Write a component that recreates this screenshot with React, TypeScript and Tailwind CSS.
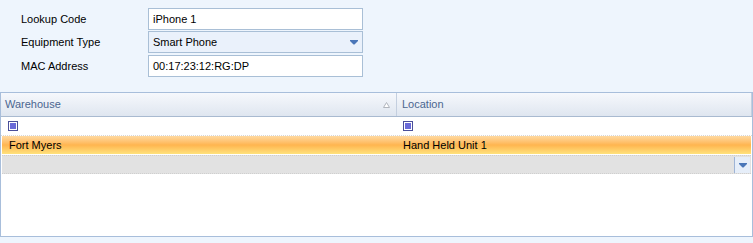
import React from "react";

function FilterIcon() {
  return (
    <span className="inline-block w-[10px] h-[10px] border border-[#4a4f9a] bg-white p-[1px]">
      <span className="block w-full h-full bg-[#6a6ad8]" />
    </span>
  );
}

function Arrow() {
  return (
    <svg width="8" height="5" viewBox="0 0 8 5">
      <path d="M0 0 H8 V1 L4.5 4.5 H3.5 L0 1 Z" fill="#4a76b8" />
    </svg>
  );
}

export default function App() {
  return (
    <div
      className="w-[753px] h-[243px] bg-[#eef5fd] text-[11px] text-black overflow-hidden"
      style={{ fontFamily: '"Liberation Sans", Arial, sans-serif' }}
    >
      <div className="pt-[8px] flex flex-col">
        <div className="flex items-center h-[22px]">
          <div className="w-[148px] pl-[21px]">Lookup Code</div>
          <div className="w-[215px] h-[22px] border border-[#a9bfd6] bg-white pl-[4px] flex items-center">iPhone 1</div>
        </div>
        <div className="flex items-center h-[22px] mt-[1px]">
          <div className="w-[148px] pl-[21px]">Equipment Type</div>
          <div className="w-[215px] h-[22px] border border-[#a9bfd6] bg-[#eaf1fb] pl-[4px] pr-[4px] flex items-center justify-between">
            <span>Smart Phone</span>
            <Arrow />
          </div>
        </div>
        <div className="flex items-center h-[22px] mt-[2px]">
          <div className="w-[148px] pl-[21px]">MAC Address</div>
          <div className="w-[215px] h-[22px] border border-[#a9bfd6] bg-white pl-[4px] flex items-center">00:17:23:12:RG:DP</div>
        </div>
      </div>

      <div className="mt-[15px] h-[145px] border border-[#a8bedb] bg-white flex flex-col">
        <div className="flex h-[24px] border-b border-[#a9bad0] bg-gradient-to-b from-[#f6f8fc] to-[#dfe6f0] text-[#4b6690]">
          <div className="w-[396px] flex items-center justify-between pl-[4px] pr-[6px] border-r border-[#c4cfdf]">
            <span>Warehouse</span>
            <svg width="7" height="6" viewBox="0 0 7 6">
              <path d="M3.5 0.5 L6.5 5.5 H0.5 Z" fill="#ffffff" stroke="#b0b5bd" strokeWidth="1" />
            </svg>
          </div>
          <div className="flex-1 flex items-center pl-[5px] border-r border-[#c4cfdf]">Location</div>
        </div>
        <div className="flex h-[19px] items-center border-b border-dotted border-[#d8d8d8]">
          <div className="w-[396px] pl-[7px] flex items-center"><FilterIcon /></div>
          <div className="flex-1 pl-[6px] flex items-center"><FilterIcon /></div>
        </div>
        <div className="flex h-[18px] mx-[1px] items-center bg-gradient-to-b from-[#ffd9a0] via-[#ffb54f] to-[#ffe27c]">
          <div className="w-[395px] pl-[7px]">Fort Myers</div>
          <div className="flex-1 pl-[6px]">Hand Held Unit 1</div>
        </div>
        <div className="flex h-[19px] mx-[1px] mt-[1px] border-t border-b border-dotted border-[#cfcfcf] bg-[#e2e2e2] justify-end">
          <div className="w-[16px] h-[16px] mt-[1px] mr-[1px] border-l border-[#9eb4d6] bg-[#e6eef9] flex items-center justify-center">
            <Arrow />
          </div>
        </div>
        <div className="flex-1 bg-white" />
      </div>
    </div>
  );
}
